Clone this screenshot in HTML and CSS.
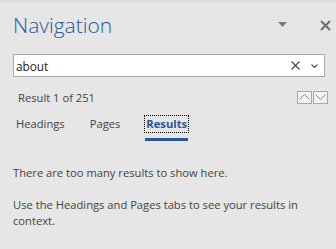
FILE: index.html
```html
<!DOCTYPE html>
<html lang="en">
<head>
<meta charset="utf-8">
<title>Navigation</title>
<link rel="stylesheet" href="styles.css">
</head>
<body>
<div class="pane">
  <div class="header">
    <h1 class="title">Navigation</h1>
    <span class="pane-menu" aria-label="Task pane options">
      <svg width="9" height="5" viewBox="0 0 9 5"><path d="M0 0H9L4.5 5Z" fill="#7a7a7a"/></svg>
    </span>
    <span class="pane-close" aria-label="Close">
      <svg width="11" height="11" viewBox="0 0 11 11"><path d="M1 1L10 10M10 1L1 10" stroke="#6e6e6e" stroke-width="2"/></svg>
    </span>
  </div>

  <div class="search">
    <span class="search-text">about</span>
    <span class="search-clear">
      <svg width="9" height="9" viewBox="0 0 9 9"><path d="M0.5 0.5L8.5 8.5M8.5 0.5L0.5 8.5" stroke="#444" stroke-width="1.1"/></svg>
    </span>
    <span class="search-drop">
      <svg width="7" height="4" viewBox="0 0 7 4"><path d="M0.5 0.5L3.5 3.5L6.5 0.5" stroke="#555" stroke-width="1.1" fill="none"/></svg>
    </span>
  </div>

  <div class="result-row">
    <span class="result-count">Result 1 of 251</span>
    <div class="steppers">
      <span class="stepper">
        <svg width="11" height="6" viewBox="0 0 11 6"><path d="M0.5 5.5L5.5 0.5L10.5 5.5" stroke="#8a8a8a" stroke-width="1" fill="none"/></svg>
      </span>
      <span class="stepper">
        <svg width="11" height="6" viewBox="0 0 11 6"><path d="M0.5 0.5L5.5 5.5L10.5 0.5" stroke="#8a8a8a" stroke-width="1" fill="none"/></svg>
      </span>
    </div>
  </div>

  <div class="tabs">
    <span class="tab">Headings</span>
    <span class="tab">Pages</span>
    <span class="tab tab-active"><span class="tab-focus">Results</span></span>
  </div>

  <div class="content">
    <p>There are too many results to show here.</p>
    <p>Use the Headings and Pages tabs to see your results in context.</p>
  </div>
</div>
</body>
</html>
```
FILE: styles.css
```css
* { box-sizing: border-box; }
html, body { margin: 0; padding: 0; }
body {
  background: #e6e6e6;
  font-family: "Open Sans", "Noto Sans", sans-serif;
  color: #444;
  width: 336px;
  height: 249px;
  overflow: hidden;
}
.pane {
  height: 249px;
  background: linear-gradient(#d9d9d9 0, #e6e6e6 4px);
}
.header {
  display: flex;
  align-items: center;
  height: 48px;
  padding: 2px 0 0 13px;
}
.title {
  margin: 0;
  font-weight: 300;
  font-size: 21px;
  line-height: 28px;
  color: #2b579a;
  flex: 1;
}
.pane-menu {
  display: flex;
  width: 9px;
  margin: 0 33px 2px 0;
}
.pane-close {
  display: flex;
  margin: 0 5px 0 0;
}
.search {
  display: flex;
  align-items: center;
  margin: 6px 11px 0 13px;
  height: 23px;
  background: #fff;
  border: 1px solid #ababab;
  padding: 0 6px 0 2px;
}
.search-text {
  flex: 1;
  font-size: 11.8px;
  color: #222;
}
.search-clear { display: flex; margin-right: 11px; }
.search-drop { display: flex; }
.result-row {
  display: flex;
  align-items: center;
  margin: 13px 8px 0 18px;
  height: 14px;
}
.result-count {
  flex: 1;
  font-size: 11.2px;
}
.steppers { display: flex; gap: 1px; }
.stepper {
  display: flex;
  align-items: center;
  justify-content: center;
  width: 15px;
  height: 13px;
  border: 1px solid #a8a8a8;
  background: #f3f3f3;
}
.tabs {
  display: flex;
  margin: 12px 0 0 16px;
  height: 25px;
}
.tab {
  font-size: 11.2px;
  margin-right: 25px;
  line-height: 16px;
}
.tab-active {
  color: #2b579a;
  font-weight: 700;
  border-bottom: 3px solid #2b579a;
  padding: 0 0 6px;
}
.tab-focus {
  outline: 1px dotted #000;
  display: inline-block;
  padding: 0 1px;
}
.content {
  padding: 24px 13px 0 13px;
  font-size: 11.2px;
  line-height: 16px;
  color: #444;
}
.content p { margin: 0 0 16px; }
```
